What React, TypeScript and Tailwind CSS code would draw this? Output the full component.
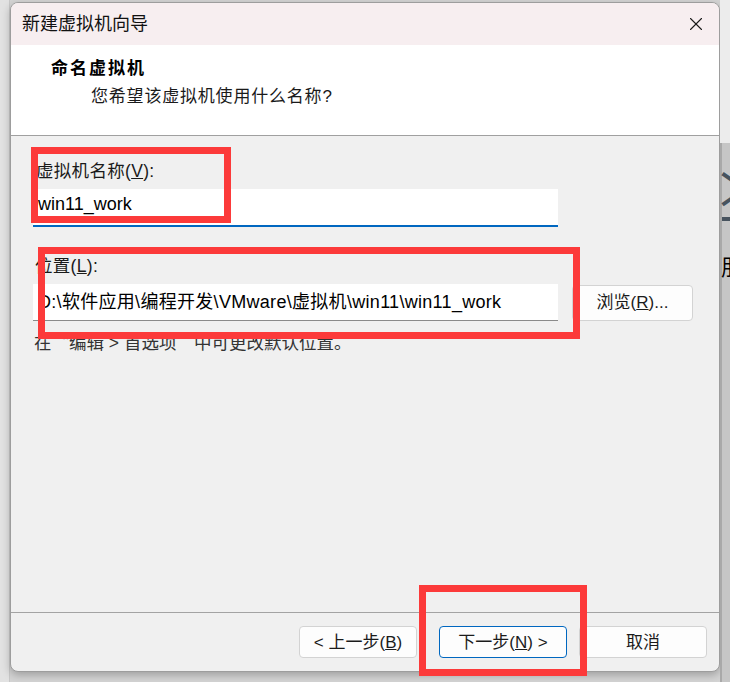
import { X } from 'lucide-react'

const font = "font-['Liberation_Sans','Noto_Sans_CJK_SC',sans-serif]"

function Btn({ children, primary, w }: { children: React.ReactNode; primary?: boolean; w: string }) {
  return (
    <button
      className={`${w} h-[32px] rounded-[4px] border bg-[#fdfdfd] text-[17px] text-[#1b1b1b] leading-none ${
        primary ? 'border-[#0067c0]' : 'border-[#d3d3d3]'
      }`}
    >
      {children}
    </button>
  )
}

export default function App() {
  return (
    <div className={`relative flex h-[682px] w-[730px] overflow-hidden bg-[#d4d4d4] ${font}`}>
      {/* desktop behind, left */}
      <div className="h-full w-[10px] shrink-0 border-r border-[#c9c9c9] bg-[#e2e2e2]" />

      {/* dialog column */}
      <div className="flex w-[710px] shrink-0 flex-col pt-[2px]">
        <div className="flex h-[670px] flex-col overflow-hidden rounded-lg border border-[#9d9d9d] bg-[#f0f0f0] shadow-[0_3px_8px_rgba(0,0,0,0.25)]">
          {/* title bar */}
          <div className="flex h-[42px] shrink-0 items-center justify-between bg-[#f7eef0] pl-[11px] pr-[12px]">
            <span className="text-[18px] text-[#111]">新建虚拟机向导</span>
            <X className="h-[22px] w-[22px] text-[#1a1a1a]" strokeWidth={1.2} />
          </div>

          {/* header */}
          <div className="flex h-[91px] shrink-0 flex-col border-b border-[#a0a0a0] bg-white pl-[40px] pt-[12px]">
            <span className="text-[17px] font-bold leading-[24px] tracking-[2px] text-black">命名虚拟机</span>
            <span className="mt-[4px] pl-[40px] text-[17px] leading-[24px] tracking-[0.8px] text-[#1a1a1a]">
              您希望该虚拟机使用什么名称?
            </span>
          </div>

          {/* body */}
          <div className="flex flex-1 flex-col border-b border-[#a3a3a3] pl-[22px] pt-[23px] text-[17.5px] text-[#1a1a1a]">
            <span className="pl-[3px] leading-[24px] tracking-[0.3px]">
              虚拟机名称(<u>V</u>):
            </span>
            <div className="mt-[6px] flex h-[38px] w-[525px] items-start border-b-2 border-[#0067c0] bg-white pl-[5px] pt-[3px] text-[18px] leading-[24px] text-black">
              win11_work
            </div>

            <span className="mt-[27px] pl-[2px] leading-[24px] tracking-[0.3px]">
              位置(<u>L</u>):
            </span>
            <div className="mt-[6px] flex items-center gap-[14px]">
              <div className="flex h-[37px] w-[525px] items-center border-b border-[#8a8a8a] bg-white pl-[5px] text-[18px] tracking-[0.3px] text-black">
                D:\软件应用\编程开发\VMware\虚拟机\win11\win11_work
              </div>
              <Btn w="w-[121px] h-[36px]">
                浏览(<u>R</u>)...
              </Btn>
            </div>
            <span className="mt-[9px] pl-[1px] leading-[24px] text-[#333]">
              在<span className="font-['Noto_Sans_CJK_SC']">“</span>编辑 &gt; 首选项<span className="font-['Noto_Sans_CJK_SC']">”</span>中可更改默认位置。
            </span>
          </div>

          {/* footer */}
          <div className="flex h-[58px] shrink-0 items-start justify-end pr-[12px] pt-[13px]">
            <Btn w="w-[118px]">&lt; 上一步(<u>B</u>)</Btn>
            <div className="w-[22px]" />
            <Btn w="w-[128px]" primary>
              下一步(<u>N</u>) &gt;
            </Btn>
            <div className="w-[12px]" />
            <Btn w="w-[128px]">取消</Btn>
          </div>
        </div>
      </div>

      {/* desktop behind, right */}
      <div className="flex h-full w-[10px] shrink-0 flex-col overflow-hidden">
        <div className="h-[143px] shrink-0 bg-[#ececec]" />
        <div className="flex flex-1 flex-col border-l-2 border-[#a9a9a9] bg-[#c6c6c6]">
          <span className="mt-[24px] -ml-[2px] text-[44px] font-bold leading-[48px] text-[#47535e]">≫</span>
          <div className="mt-[2px] h-[4px] w-full bg-[#47535e]" />
          <span className="mt-[34px] -ml-[1px] text-[22px] leading-[26px] text-black">朋</span>
        </div>
      </div>

      {/* annotation boxes */}
      <div className="absolute left-[31px] top-[147px] h-[76px] w-[200px] border-[7px] border-[#fc3a3a]" />
      <div className="absolute left-[38px] top-[247px] h-[92px] w-[542px] border-[7px] border-[#fc3a3a]" />
      <div className="absolute left-[419px] top-[585px] h-[91px] w-[168px] border-[7px] border-[#fc3a3a]" />
    </div>
  )
}
